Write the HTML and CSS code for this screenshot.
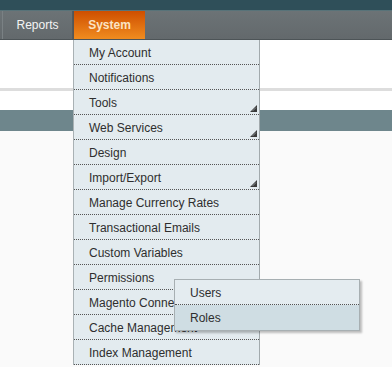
FILE: index.html
```html
<!DOCTYPE html>
<html lang="en">
<head>
    <meta charset="UTF-8">
    <title>System - Admin</title>
    <link rel="stylesheet" href="styles.css">
</head>
<body>
<div class="header"></div>
<nav class="nav">
    <div class="nav-item">Reports</div>
    <div class="nav-item active">
        System
        <ul class="menu">
            <li>My Account</li>
            <li>Notifications</li>
            <li class="parent">Tools<span class="arrow"><svg width="7" height="7" viewBox="0 0 7 7"><polygon points="7,0 7,7 0,7" fill="#3a3a3a"/><line x1="6" y1="2.5" x2="2.5" y2="6" stroke="#9aa2a6" stroke-width="0.8"/></svg></span></li>
            <li class="parent">Web Services<span class="arrow"><svg width="7" height="7" viewBox="0 0 7 7"><polygon points="7,0 7,7 0,7" fill="#3a3a3a"/><line x1="6" y1="2.5" x2="2.5" y2="6" stroke="#9aa2a6" stroke-width="0.8"/></svg></span></li>
            <li>Design</li>
            <li class="parent">Import/Export<span class="arrow"><svg width="7" height="7" viewBox="0 0 7 7"><polygon points="7,0 7,7 0,7" fill="#3a3a3a"/><line x1="6" y1="2.5" x2="2.5" y2="6" stroke="#9aa2a6" stroke-width="0.8"/></svg></span></li>
            <li>Manage Currency Rates</li>
            <li>Transactional Emails</li>
            <li>Custom Variables</li>
            <li class="open">Permissions
                <ul class="submenu">
                    <li>Users</li>
                    <li class="hover">Roles</li>
                </ul>
            </li>
            <li>Magento Connect</li>
            <li>Cache Management</li>
            <li>Index Management</li>
        </ul>
    </div>
</nav>
<div class="page">
    <div class="page-top"></div>
    <div class="page-rule"></div>
    <div class="page-gap"></div>
    <div class="page-bar"></div>
    <div class="page-body"></div>
</div>
</body>
</html>
```

FILE: styles.css
```css
* {
    margin: 0;
    padding: 0;
    box-sizing: border-box;
}

body {
    font-family: 'Liberation Sans', Arial, sans-serif;
    font-size: 12px;
    color: #2e2e2e;
    background: #fafafa;
    overflow: hidden;
}

.header {
    height: 11px;
    background: #2f4f59;
    border-bottom: 1px solid #587379;
}

.nav {
    height: 29px;
    display: flex;
    padding-left: 2px;
    background: linear-gradient(#6c7376, #63696c);
    border-bottom: 1px solid #4d5457;
    position: relative;
    z-index: 2;
}

.nav-item {
    width: 71px;
    line-height: 28px;
    text-align: center;
    color: #f4f4f4;
    border-left: 1px solid #7a8184;
    border-right: 1px solid #545b5e;
    position: relative;
}

.nav-item.active {
    width: 72px;
    border-left: 1px solid #555;
    border-right: 0;
    font-weight: bold;
    color: #fbe3c2;
    background: linear-gradient(#cf4f00, #f08c1f);
}

.menu {
    list-style: none;
    position: absolute;
    top: 29px;
    left: -1px;
    width: 187px;
    background: #e3ebef;
    border-left: 1px solid #a9b1b4;
    border-right: 1px solid #a2aaad;
    text-align: left;
    font-weight: normal;
    color: #2e2e2e;
}

.menu li {
    height: 25px;
    line-height: 26px;
    padding-left: 15px;
    border-bottom: 1px dotted #555;
    position: relative;
}

.arrow {
    position: absolute;
    right: 2px;
    bottom: 2px;
    width: 7px;
    height: 7px;
    line-height: 0;
}

.submenu {
    list-style: none;
    position: absolute;
    top: 14px;
    left: 100px;
    width: 186px;
    background: #e4ecf0;
    border: 1px solid #a7afb2;
    box-shadow: 2px 2px 2px rgba(0, 0, 0, 0.25);
    z-index: 3;
}

.submenu li {
    padding-left: 15px;
}

.submenu li:last-child {
    border-bottom: 0;
}

.submenu li.hover {
    background: #cfdde3;
}

.page-top {
    height: 48px;
    background: #fff;
}

.page-rule {
    height: 3px;
    background: #dddddd;
}

.page-gap {
    height: 19px;
    background: #fff;
}

.page-bar {
    height: 21px;
    background: #6e868c;
}

.page-body {
    height: 240px;
    background: #fafafa;
}
```
